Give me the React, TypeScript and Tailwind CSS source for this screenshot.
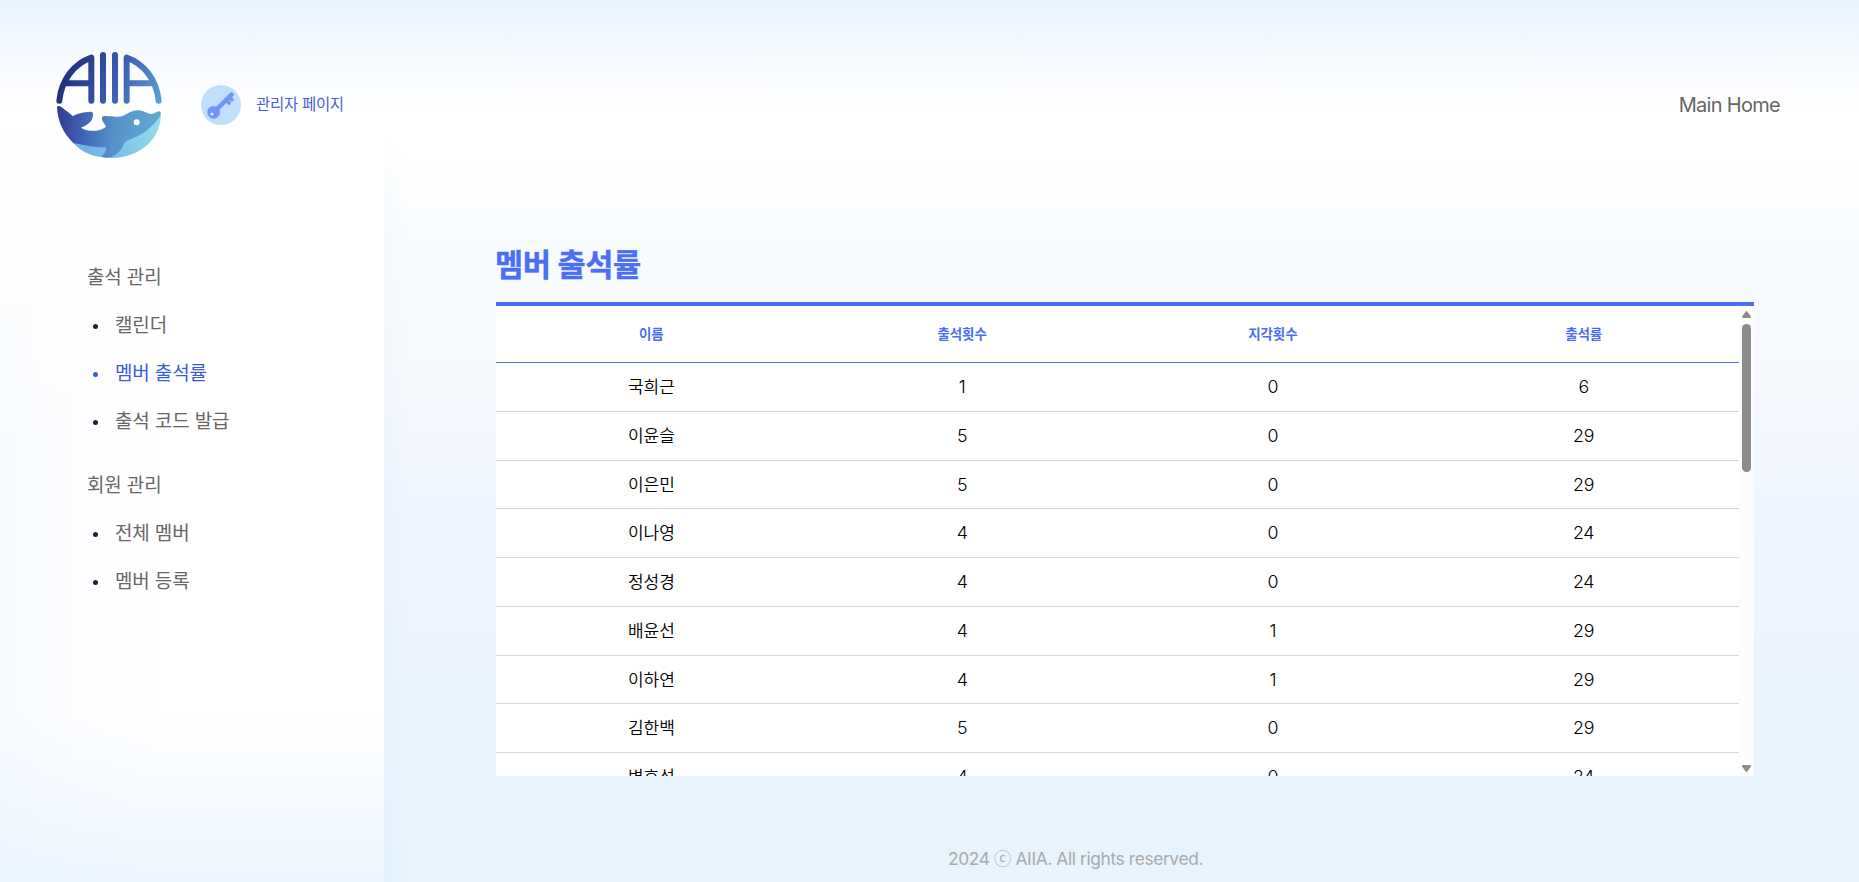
const members: [string, number, number, number][] = [
  ["국희근", 1, 0, 6],
  ["이윤슬", 5, 0, 29],
  ["이은민", 5, 0, 29],
  ["이나영", 4, 0, 24],
  ["정성경", 4, 0, 24],
  ["배윤선", 4, 1, 29],
  ["이하연", 4, 1, 29],
  ["김한백", 5, 0, 29],
  ["변호석", 4, 0, 24],
];

const menu = [
  { title: "출석 관리", items: ["캘린더", "멤버 출석률", "출석 코드 발급"] },
  { title: "회원 관리", items: ["전체 멤버", "멤버 등록"] },
];

function Logo() {
  return (
    <svg className="size-[120px] shrink-0" viewBox="0 0 360 360" fill="none">
      <defs>
        <linearGradient id="ink" x1="60" y1="60" x2="330" y2="170" gradientUnits="userSpaceOnUse">
          <stop offset="0" stopColor="#213380" />
          <stop offset="0.5" stopColor="#3b5cb0" />
          <stop offset="1" stopColor="#5da0d2" />
        </linearGradient>
        <linearGradient id="body" x1="30" y1="210" x2="310" y2="240" gradientUnits="userSpaceOnUse">
          <stop offset="0" stopColor="#333f94" />
          <stop offset="0.25" stopColor="#4062b4" />
          <stop offset="0.6" stopColor="#5792ca" />
          <stop offset="1" stopColor="#5ea6d4" />
        </linearGradient>
        <linearGradient id="belly" x1="120" y1="320" x2="330" y2="210" gradientUnits="userSpaceOnUse">
          <stop offset="0" stopColor="#73b4e8" />
          <stop offset="1" stopColor="#94e0ea" />
        </linearGradient>
      </defs>
      <g stroke="url(#ink)" strokeWidth="18" strokeLinecap="round" strokeLinejoin="round">
        <path d="M28 167C34 105 72 56 124 38V167M43 115H124" />
        <path d="M159 30V167M195 30L195.1 167" />
        <path d="M326 167C320 105 282 56 230 38V167M230 115H311" />
      </g>
      <path
        d="M332 204C337 275 275 338 184 339C132 338 95 323 70 294L160 300L220 270L290 240Z"
        fill="url(#belly)"
      />
      <path
        d="M21 187C23 181 30 182 37 188C48 198 61 204 69 214C84 202 102 203 121 200C129 199 131 207 128 216C125 232 109 242 93 248C105 256 121 258 139 257C148 255 160 252 168 245C162 234 154 225 156 217C159 211 170 213 180 214C190 214 204 217 216 214C234 206 247 195 266 196C283 197 293 208 305 207C315 206 321 197 330 199C334 202 332 210 328 217C312 239 293 257 266 272C252 279 239 283 227 289C218 303 211 327 184 336C171 338 157 338 155 334C167 324 170 315 168 307C139 308 101 301 70 294C42 268 23 231 21 187Z"
        fill="url(#body)"
      />
      <circle cx="260" cy="232" r="9" fill="#fff" />
    </svg>
  );
}

function KeyBadge() {
  return (
    <svg className="size-10 shrink-0" viewBox="0 0 120 120" fill="none">
      <circle cx="60" cy="60" r="60" fill="#bfdffc" />
      <path d="M46 74L92 29" stroke="#7096f8" strokeWidth="13" strokeLinecap="round" />
      <path d="M75 44L84 54M84 34L93 44" stroke="#7096f8" strokeWidth="11" strokeLinecap="round" />
      <circle cx="38" cy="82" r="19" fill="#7096f8" />
      <circle cx="33" cy="87" r="4.5" fill="#e3f1fe" />
    </svg>
  );
}

function Scrollbar() {
  return (
    <div className="flex w-[15px] shrink-0 flex-col items-center bg-[#fcfcfc] pt-[5px] pb-1">
      <svg className="h-[7px] w-[9px] shrink-0" viewBox="0 0 9 7" fill="#8b8b8b">
        <path d="M3.6.7Q4.5-.5 5.4.7L8.8 5.2Q9.3 7 8 7H1Q-.3 7 .2 5.2Z" />
      </svg>
      <div className="mt-1.5 h-[148px] w-[9px] shrink-0 rounded-full bg-[#8b8b8b]" />
      <svg className="mt-auto h-[7px] w-[9px] shrink-0" viewBox="0 0 9 7" fill="#8b8b8b">
        <path d="M3.6 6.3Q4.5 7.5 5.4 6.3L8.8 1.8Q9.3 0 8 0H1Q-.3 0 .2 1.8Z" />
      </svg>
    </div>
  );
}

export default function App() {
  return (
    <div className="grid h-[882px] w-[1859px] grid-cols-[384px_1fr] grid-rows-[125px_1fr] overflow-hidden bg-[linear-gradient(180deg,#e8f4ff_0px,#f4f9ff_45px,#ffffff_110px,#ffffff_160px,#f8fcff_240px,#f6fafe_360px,#eff5ff_520px,#e9f4fe_740px,#e7f4fe_882px)] font-['Inter','Noto_Sans_CJK_KR',sans-serif]">
      <header className="relative z-10 col-span-2 flex h-[210px] items-center pr-[79px] pl-[50px]">
        <Logo />
        <div className="ml-[31px] flex items-center gap-[15px]">
          <KeyBadge />
          <span className="text-[15.5px] leading-5 tracking-[-0.3px] text-[#4a5fd8]">관리자 페이지</span>
        </div>
        <a className="ml-auto text-[20px] leading-6 tracking-[-0.7px] text-[#666]">Main Home</a>
      </header>

      <aside className="bg-[linear-gradient(180deg,rgba(232,244,255,0)_0px,rgba(232,244,255,0)_590px,rgba(232,244,255,0.8)_757px),linear-gradient(180deg,#ffffff_0px,rgba(255,255,255,0)_350px),linear-gradient(90deg,#f7fbff_0px,#fcfdff_70px,#ffffff_160px)] pt-[138px] pl-[87px] shadow-[0_30px_30px_rgba(80,110,160,0.045)] [clip-path:inset(0_-60px_0_0)]">
        {menu.map((group) => (
          <section key={group.title} className="mb-[34px] text-[19px] leading-[30px] tracking-[-0.15px] text-[#666]">
            <h2>{group.title}</h2>
            <ul>
              {group.items.map((item) => (
                <li
                  key={item}
                  className={
                    item === "멤버 출석률"
                      ? "mt-[18px] flex items-center text-[#3b5bdb]"
                      : "mt-[18px] flex items-center"
                  }
                >
                  <span
                    className={
                      item === "멤버 출석률"
                        ? "mt-px mr-[17px] ml-[6px] size-[5px] rounded-full bg-[#3b5bdb]"
                        : "mt-px mr-[17px] ml-[6px] size-[5px] rounded-full bg-[#212529]"
                    }
                  />
                  {item}
                </li>
              ))}
            </ul>
          </section>
        ))}
      </aside>

      <main className="flex flex-col pt-[118px] pr-[105px] pl-[111px]">
        <h1 className="h-[59px] text-[30.6px] leading-[44px] font-bold tracking-[-0.35px] text-[#4c6ef5] [-webkit-text-stroke:0.4px_#4c6ef5]">
          멤버 출석률
        </h1>
        <div className="ml-px flex h-[474px] w-[1258px] overflow-hidden border-t-4 border-[#4c6ef5] bg-white">
          <div className="flex-1">
            <div className="grid h-[57px] grid-cols-4 items-center border-b border-[#4c6ef5] text-center text-[13.5px] font-bold tracking-[-0.1px] text-[#4c6ef5]">
              <span>이름</span>
              <span>출석횟수</span>
              <span>지각횟수</span>
              <span>출석률</span>
            </div>
            {members.map(([name, ...counts]) => (
              <div
                key={name}
                className="grid h-[48.75px] grid-cols-4 items-center border-b border-[#d9d9d9] pt-px text-center font-light text-black"
              >
                <span className="pt-px text-[17px] font-[350]">{name}</span>
                {counts.map((count, i) => (
                  <span key={i} className="text-[17.8px] tracking-[-0.3px]">
                    {count}
                  </span>
                ))}
              </div>
            ))}
          </div>
          <Scrollbar />
        </div>
        <footer className="mt-[71px] ml-[453px] text-[17.4px] leading-6 tracking-[-0.4px] text-[#aaa]">
          2024 ⓒ AIIA. All rights reserved.
        </footer>
      </main>
    </div>
  );
}
